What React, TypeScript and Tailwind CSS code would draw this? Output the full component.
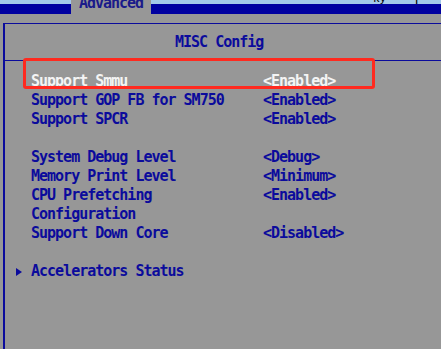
import React from "react";

type Row = { label: string; value?: string; selected?: boolean; submenu?: boolean } | null;

const rows: Row[] = [
  { label: "Support Smmu", value: "<Enabled>", selected: true },
  { label: "Support GOP FB for SM750", value: "<Enabled>" },
  { label: "Support SPCR", value: "<Enabled>" },
  null,
  { label: "System Debug Level", value: "<Debug>" },
  { label: "Memory Print Level", value: "<Minimum>" },
  { label: "CPU Prefetching", value: "<Enabled>" },
  { label: "Configuration" },
  { label: "Support Down Core", value: "<Disabled>" },
  null,
  { label: "Accelerators Status", submenu: true },
];

export default function App() {
  return (
    <div
      className="relative w-[441px] h-[349px] overflow-hidden bg-[#979797] text-[#0b0b9c] font-bold text-[15px] tracking-[-1px]"
      style={{ fontFamily: '"DejaVu Sans Mono", "Liberation Mono", monospace' }}
    >
      {/* Top bar with the Advanced tab */}
      <div className="flex h-[14px]">
        <div className="w-[71px] flex flex-col">
          <div className="h-[4px] bg-[#a3c9e9]" />
          <div className="flex-1 bg-[#0000a0]" />
        </div>
        <div className="w-[80px] bg-[#979797] overflow-hidden">
          <div className="-mt-[4px] leading-[14px] text-center text-[#1a1a8a]">Advanced</div>
        </div>
        <div className="flex-1 flex flex-col">
          <div className="h-[4px] bg-[#a3c9e9] relative overflow-hidden">
            <span className="absolute left-[222px] -top-[9px] text-[11px] font-normal text-black tracking-normal">ky</span>
            <span className="absolute left-[262px] -top-[9px] text-[12px] font-normal text-black tracking-normal">T</span>
          </div>
          <div className="flex-1 bg-[#0000a0]" />
        </div>
      </div>

      {/* Panel */}
      <div className="ml-[3px] mt-[9px] h-[326px] border-t border-l-2 border-[#0b0b9c]">
        <div className="h-[36px] pl-[170px] pt-[9px] leading-[19px]">MISC Config</div>
        <div className="border-t border-[#0b0b9c]" />
        <div className="pt-[11px]">
          {rows.map((r, i) =>
            r === null ? (
              <div key={i} className="h-[19px]" />
            ) : (
              <div key={i} className={`flex h-[19px] leading-[19px] ${r.selected ? "text-[#f4f4f4]" : ""}`}>
                <div className="w-[26px] flex items-center pl-[11px]">
                  {r.submenu && (
                    <svg width="6" height="8" viewBox="0 0 6 8">
                      <path d="M0 0 L6 4 L0 8 Z" fill="#0b0b9c" />
                    </svg>
                  )}
                </div>
                <div className="w-[232px] whitespace-nowrap">{r.label}</div>
                <div className="whitespace-nowrap">{r.value}</div>
              </div>
            )
          )}
        </div>
      </div>

      {/* Red highlight annotation */}
      <div className="absolute left-[23px] top-[58px] w-[352px] h-[31px] border-[3px] border-[#ff2a1f] rounded-[3px]" />
    </div>
  );
}
